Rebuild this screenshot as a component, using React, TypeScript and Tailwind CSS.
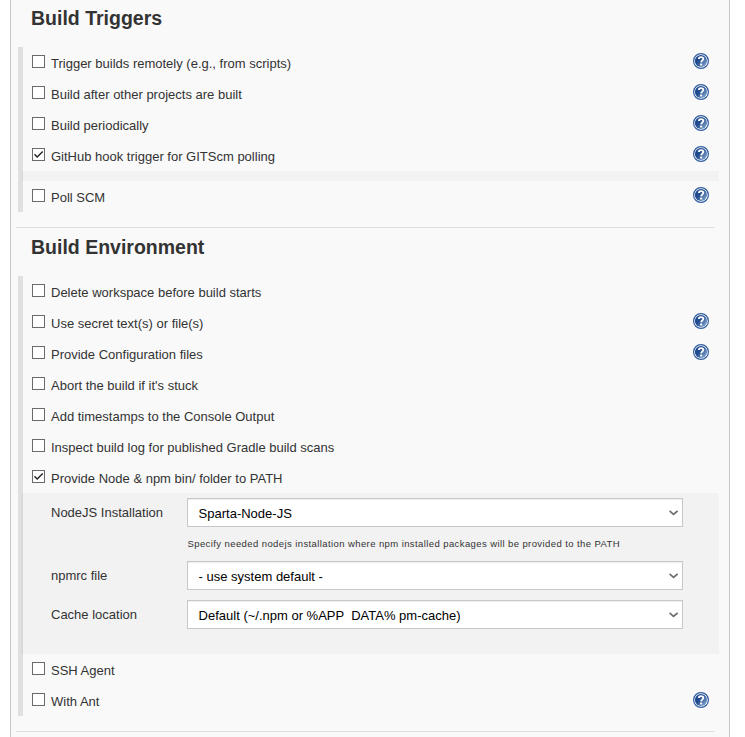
import React from "react";

function HelpIcon({ offset = "mt-[6px]" }: { offset?: string }) {
  return (
    <svg width="16" height="16" viewBox="0 0 16 16" className={"mr-[10px] shrink-0 " + offset} role="img" aria-label="Help">
      <defs>
        <linearGradient id="help-fill" x1="0" y1="0.1" x2="1" y2="0.9">
          <stop offset="0.4" stopColor="#204a8c" />
          <stop offset="1" stopColor="#8fb0d8" />
        </linearGradient>
      </defs>
      <circle cx="8" cy="8" r="7.400" fill="#ffffff" stroke="#2f5c9f" strokeWidth="1.200" />
      <circle cx="8" cy="8" r="6.100" fill="url(#help-fill)" />
      <path d="M5.900 6C5.900 4.700 6.800 4.100 8.100 4.100c1.400 0 2.200.7 2.200 1.700 0 1.600-2 1.600-2.100 3.600" fill="none" stroke="#fff" strokeWidth="1.900" />
      <rect x="7.100" y="10.600" width="2.100" height="1.900" fill="#fff" />
    </svg>
  );
}

type RowProps = { label: string; checked?: boolean; help?: boolean; helpOffset?: string };

function OptionRow({ label, checked, help, helpOffset }: RowProps) {
  return (
    <div className="flex h-[31px] items-start pl-[9px]">
      <span
        role="checkbox"
        aria-checked={!!checked}
        className="mt-[8px] flex h-[13px] w-[13px] shrink-0 items-center justify-center border border-[#6b6b6b] bg-white"
      >
        {checked && (
          <svg width="11" height="11" viewBox="0 0 11 11">
            <path d="M1.500 5.300L4.200 8L9.700 2.500" fill="none" stroke="#222" strokeWidth="1.400" />
          </svg>
        )}
      </span>
      <span className="ml-[6px] mt-[8px] flex-1 whitespace-nowrap text-[13px] leading-[17px]">{label}</span>
      {help && <HelpIcon offset={helpOffset} />}
    </div>
  );
}

function SelectBox({ value }: { value: string }) {
  return (
    <div className="flex h-[29px] w-[496px] items-center justify-between border border-[#c8c8c8] bg-white pl-[10.6px] pr-[4px] text-black shadow-[inset_0_1px_1px_rgba(0,0,0,0.075)]">
      <span className="whitespace-pre pt-[2px] text-[13px] leading-[17px]">{value}</span>
      <svg width="9" height="6" viewBox="0 0 9 6">
        <path d="M0.600 0.900L4.500 4.400L8.600 0.900" fill="none" stroke="#6e6e6e" strokeWidth="1.700" />
      </svg>
    </div>
  );
}

function FieldLabel({ children }: { children: string }) {
  return <span className="w-[136px] shrink-0 pt-[6px] text-[13px] leading-[17px]">{children}</span>;
}

export default function App() {
  return (
    <div className="h-[737px] overflow-hidden bg-white px-[10px] font-['Liberation_Sans',Arial,sans-serif] text-[#333]">
      <main className="h-full w-[720px] border-x border-[#c8c8c8] bg-[#f9f9f9]">
        <h2 className="h-[47px] pl-[20px] pt-[6px] text-[19.5px] font-bold leading-[24px]">Build Triggers</h2>
        <section className="ml-[7px] mr-[10px] border-l-[5px] border-[#e0e0e0]">
          <OptionRow label="Trigger builds remotely (e.g., from scripts)" help />
          <OptionRow label="Build after other projects are built" help />
          <OptionRow label="Build periodically" help />
          <OptionRow label="GitHub hook trigger for GITScm polling" checked help />
          <div className="-ml-[2px] h-[10px] bg-black/[0.027]" />
          <OptionRow label="Poll SCM" help />
        </section>
        <hr className="ml-[5px] mt-[15px] w-[698px] border-[#ddd]" />
        <h2 className="h-[48px] pl-[20px] pt-[7px] text-[19.5px] font-bold leading-[24px]">Build Environment</h2>
        <section className="ml-[7px] mr-[10px] border-l-[5px] border-[#e0e0e0]">
          <OptionRow label="Delete workspace before build starts" />
          <OptionRow label="Use secret text(s) or file(s)" help />
          <OptionRow label="Provide Configuration files" help />
          <OptionRow label="Abort the build if it's stuck" />
          <OptionRow label="Add timestamps to the Console Output" />
          <OptionRow label="Inspect build log for published Gradle build scans" />
          <OptionRow label="Provide Node &amp; npm bin/ folder to PATH" checked />
          <div className="-ml-[2px] h-[161px] bg-black/[0.027] pl-[30px] pt-[5px]">
            <div className="flex">
              <FieldLabel>NodeJS Installation</FieldLabel>
              <SelectBox value="Sparta-Node-JS" />
            </div>
            <p className="ml-[136.5px] h-[34px] whitespace-nowrap pt-[10px] text-[9.5px] leading-[14px] tracking-[0.405px]">
              Specify needed nodejs installation where npm installed packages will be provided to the PATH
            </p>
            <div className="flex">
              <FieldLabel>npmrc file</FieldLabel>
              <SelectBox value="- use system default -" />
            </div>
            <div className="mt-[10px] flex">
              <FieldLabel>Cache location</FieldLabel>
              <SelectBox value="Default (~/.npm or %APP  DATA% pm-cache)" />
            </div>
          </div>
          <OptionRow label="SSH Agent" />
          <OptionRow label="With Ant" help helpOffset="mt-[7px]" />
        </section>
        <hr className="ml-[5px] mt-[15px] w-[698px] border-[#ddd]" />
      </main>
    </div>
  );
}
